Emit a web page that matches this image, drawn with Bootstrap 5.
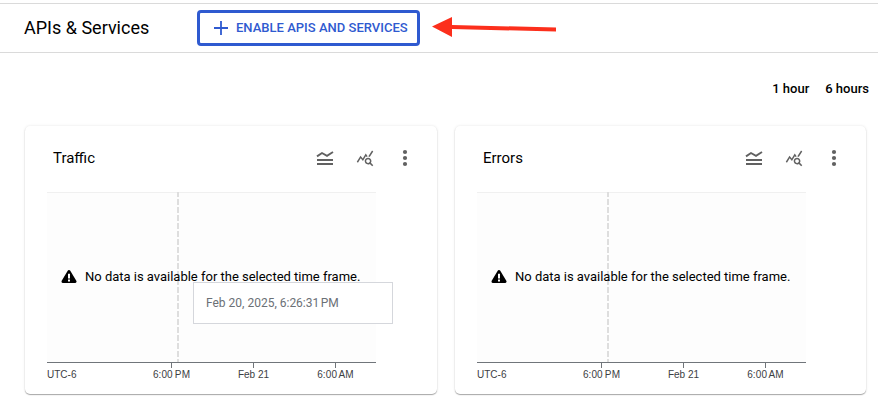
<!DOCTYPE html>
<html lang="en">
<head>
<meta charset="utf-8">
<meta name="viewport" content="width=device-width, initial-scale=1">
<title>APIs &amp; Services</title>
<link href="https://cdn.jsdelivr.net/npm/bootstrap@5.3.0/dist/css/bootstrap.min.css" rel="stylesheet">
<style>
body{font-family:Roboto,"Liberation Sans",sans-serif;color:#000;background:#fff}
.topbar{height:50px;border-top:1px solid #dadada;border-bottom:1px solid #dadada;padding-left:24px}
.page{padding-top:3px}
.page-title{font-size:18px;line-height:24px;width:173px}
.btn-enable{width:223px;height:36px;border:3px solid #2f5ad0;border-radius:4px;color:#2f5ad0;font-size:13px;font-weight:500;line-height:18px;padding:0 0 0 14px;background:#fff;letter-spacing:.01px}
.btn-enable svg{margin-right:8px}
.pointer-arrow{margin-left:12px}
.ranges{height:73px;padding:0 9px 2px 0;font-size:13px;font-weight:500;gap:16px}
.cards{padding-left:25px;gap:18px}
.metric{width:412px;height:268px;border:0;border-radius:5px;background:#fff;box-shadow:0 1px 1px rgba(0,0,0,.32),0 0 3px rgba(0,0,0,.1)}
.metric + .metric{width:411px}
.metric-head{height:66px;padding:0 29px 2px 28px}
.metric-title{font-size:15px;line-height:20px}
.tools{color:#616161}
.tools svg:nth-child(1){margin-right:22px}
.tools svg:nth-child(2){margin-right:28px}
.plot{margin-left:22px;width:342px;height:195px}
.plot text{font-family:"Liberation Sans",Arial,sans-serif;font-size:10px;fill:#3c4043}
.plot .clock{word-spacing:-.8px;letter-spacing:.1px}
.notice{left:36px;top:142px;font-size:13px;line-height:18px;letter-spacing:-.01px;white-space:nowrap}
.notice svg{margin-right:8px}
.time-tip{left:168px;top:156px;width:200px;height:42px;border:1px solid #d5d7dc;background:#fff;color:#6b7076;font-size:12px;padding-left:12px}
.time-tip span{margin-left:1.500px}
</style>
<script src="https://cdn.jsdelivr.net/npm/bootstrap@5.3.0/dist/js/bootstrap.bundle.min.js"></script>
</head>
<body>
<svg class="d-none">
  <symbol id="i-legend" viewBox="0 0 18 18"><path d="M1 7.4 6 4l5 2.8L17 3" fill="none" stroke="currentColor" stroke-width="1.9"/><path d="M1 10h16v2H1zM1 14h16v2H1z" fill="currentColor"/></symbol>
  <symbol id="i-explore" viewBox="0 0 24 24"><path fill="currentColor" d="M19.88 18.47c.44-.7.7-1.51.7-2.39 0-2.49-2.01-4.5-4.5-4.5s-4.5 2.01-4.5 4.5 2.01 4.5 4.49 4.5c.88 0 1.7-.26 2.39-.7L21.58 23 23 21.58l-3.12-3.11zm-3.8.11c-1.38 0-2.5-1.12-2.5-2.5s1.12-2.5 2.5-2.5 2.5 1.12 2.5 2.5-1.12 2.5-2.5 2.5zm-.36-8.5c-.74.02-1.45.18-2.1.45l-.55-.83-3.8 6.18-3.01-3.52-3.63 5.81L1 17l5-8 3 3.5L13 6l2.72 4.08zm2.59.5c-.64-.28-1.33-.45-2.05-.49L21.38 2 23 3.18l-4.69 7.4z"/></symbol>
  <symbol id="i-more" viewBox="0 0 6 18"><g fill="currentColor"><circle cx="3" cy="3" r="2.1"/><circle cx="3" cy="9" r="2.1"/><circle cx="3" cy="15" r="2.1"/></g></symbol>
  <symbol id="i-warn" viewBox="0 0 16 16"><path d="M8 2.500 14 12.500H2z" fill="#000" stroke="#000" stroke-width="3" stroke-linejoin="round"/><path d="M7 4.800h2v4.700H7zM7 10.500h2v2H7z" fill="#fff"/></symbol>
  <symbol id="i-plot" viewBox="0 0 342 195">
    <path d="M0 0h329v170H0z" fill="#fdfdfd"/>
    <path d="M0 .5h329" stroke="#f0f0f0"/>
    <path d="M131 0v170" stroke="#dedede" stroke-width="2" stroke-dasharray="6 2" stroke-dashoffset="1"/>
    <path d="M0 170.5h329M124.500 171v5M206.500 171v5M288.500 171v5" stroke="#70757a" fill="none"/>
  </symbol>
</svg>

<div class="page min-vh-100">
<header class="topbar d-flex align-items-center">
  <h1 class="page-title fw-normal mb-0">APIs &amp; Services</h1>
  <button type="button" class="btn btn-enable d-flex align-items-center"><svg width="14" height="14" viewBox="0 0 14 14"><path d="M7 0v14M0 7h14" stroke="currentColor" stroke-width="1.8"/></svg>ENABLE APIS AND SERVICES</button>
  <svg class="pointer-arrow" width="126" height="24" viewBox="0 0 126 24"><path d="M0 10.500 20 1V9L124 11.500V15.500L20 13V21z" fill="#fc2f1c"/></svg>
</header>

<main>
  <div class="ranges d-flex justify-content-end align-items-center"><span>1 hour</span><span>6 hours</span></div>
  <div class="cards d-flex">
    <section class="card metric">
      <div class="metric-head d-flex align-items-center justify-content-between">
        <h2 class="metric-title fw-normal mb-0">Traffic</h2>
        <div class="tools d-flex align-items-center"><svg width="18" height="18"><use href="#i-legend"/></svg><svg width="18" height="18"><use href="#i-explore"/></svg><svg width="6" height="18"><use href="#i-more"/></svg></div>
      </div>
      <svg class="plot"><use href="#i-plot"/><text x="0" y="186">UTC-6</text><text class="clock" x="124.500" y="186" text-anchor="middle">6:00 PM</text><text x="206.500" y="186" text-anchor="middle">Feb 21</text><text class="clock" x="288.500" y="186" text-anchor="middle">6:00 AM</text></svg>
      <div class="notice position-absolute d-flex align-items-center"><svg width="16" height="16"><use href="#i-warn"/></svg>No data is available for the selected time frame.</div>
      <div class="time-tip position-absolute d-flex align-items-center">Feb 20, 2025, 6:26:31<span>PM</span></div>
    </section>
    <section class="card metric">
      <div class="metric-head d-flex align-items-center justify-content-between">
        <h2 class="metric-title fw-normal mb-0">Errors</h2>
        <div class="tools d-flex align-items-center"><svg width="18" height="18"><use href="#i-legend"/></svg><svg width="18" height="18"><use href="#i-explore"/></svg><svg width="6" height="18"><use href="#i-more"/></svg></div>
      </div>
      <svg class="plot"><use href="#i-plot"/><text x="0" y="186">UTC-6</text><text class="clock" x="124.500" y="186" text-anchor="middle">6:00 PM</text><text x="206.500" y="186" text-anchor="middle">Feb 21</text><text class="clock" x="288.500" y="186" text-anchor="middle">6:00 AM</text></svg>
      <div class="notice position-absolute d-flex align-items-center"><svg width="16" height="16"><use href="#i-warn"/></svg>No data is available for the selected time frame.</div>
    </section>
  </div>
</main>
</div>
</body>
</html>
